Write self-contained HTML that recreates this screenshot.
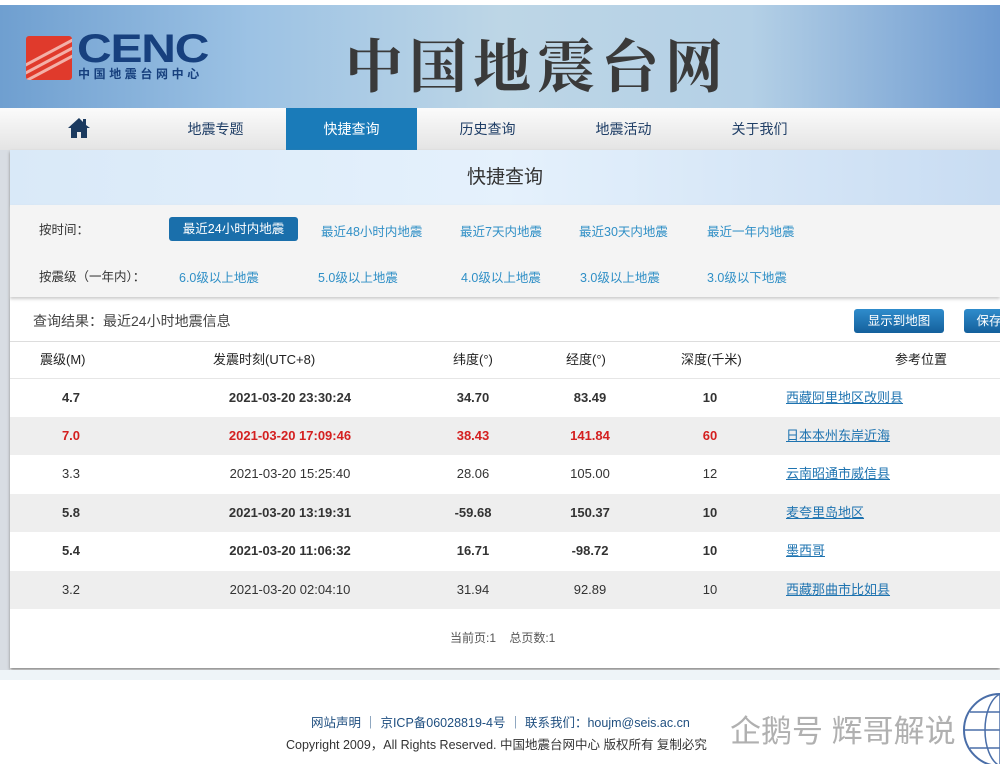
<!DOCTYPE html>
<html><head><meta charset="utf-8"><style>
*{margin:0;padding:0;box-sizing:border-box}
body{width:1000px;height:764px;overflow:hidden;background:#fff;font-family:"Liberation Sans","Noto Sans CJK SC",sans-serif;position:relative;color:#333}
.a{position:absolute;white-space:nowrap}
#hdr{left:0;top:5px;width:1000px;height:103px;background:linear-gradient(90deg,#6f9fd0 0%,#9cc2e4 25%,#bdd6e6 50%,#b4d0e6 75%,#6d9ad0 100%)}
#nav{left:0;top:108px;width:1000px;height:42px;background:linear-gradient(#fbfbfb,#e4e4e4)}
.nv{top:108px;height:42px;line-height:42px;font-size:14px;color:#1f3e66;text-align:center}
#panel{left:10px;top:150px;width:990px;height:518px;background:#fff;box-shadow:0 2px 3px #888}
.f{font-size:12.5px;color:#2f8fc6}
.th{top:342px;height:36px;line-height:36px;font-size:13px;color:#222}
.r{position:absolute;left:10px;width:990px;height:38.5px;font-size:13px;line-height:38px}
.r span{position:absolute;text-align:center}
.r .l{color:#1e73b0;text-decoration:underline;text-align:left;font-weight:normal}
.b{font-weight:bold}
.btn{top:309px;height:24px;line-height:24px;font-size:12.5px;color:#fff;background:linear-gradient(#2f8ccc,#14609c);border-radius:3px;text-align:center}
</style></head><body>
<div class="a" id="hdr"></div>
<div class="a" style="left:26px;top:36px;width:46px;height:44px;background:#e03a2c;border-radius:3px;overflow:hidden">
<div style="position:absolute;left:-10px;top:14px;width:70px;height:3px;background:#f3b0a8;transform:rotate(-28deg)"></div>
<div style="position:absolute;left:-10px;top:22px;width:70px;height:3px;background:#f3b0a8;transform:rotate(-28deg)"></div>
<div style="position:absolute;left:-10px;top:30px;width:70px;height:3px;background:#f3b0a8;transform:rotate(-28deg)"></div></div>
<div class="a" style="left:77px;top:27px;font-size:40px;font-weight:900;color:#17407e;letter-spacing:-1px;font-family:'Liberation Sans',sans-serif;transform:scaleX(1.2);transform-origin:0 0">CENC</div>
<div class="a" style="left:78px;top:65px;font-size:12px;color:#17407e;letter-spacing:3.6px;font-weight:bold">中国地震台网中心</div>
<div class="a" style="left:345px;top:20px;font-size:58px;font-weight:700;color:#3a3a3a;letter-spacing:6px;font-family:'Noto Serif CJK SC',serif">中国地震台网</div>
<div class="a" id="nav"></div>
<svg class="a" style="left:67px;top:116px" width="24" height="24" viewBox="0 0 24 24"><path d="M12 2L1 12h3v10h6v-6h4v6h6V12h3L19 9V3h-3v3z" fill="#1b3a5f"/></svg>
<div class="a nv" style="left:150px;width:131px">地震专题</div>
<div class="a nv" style="left:286px;width:131px;background:#1a7bb9;color:#fff">快捷查询</div>
<div class="a nv" style="left:422px;width:131px">历史查询</div>
<div class="a nv" style="left:558px;width:131px">地震活动</div>
<div class="a nv" style="left:694px;width:131px">关于我们</div>
<div class="a" style="left:0;top:150px;width:10px;height:520px;background:#d8dde3"></div>
<div class="a" id="panel"></div>
<div class="a" style="left:10px;top:150px;width:990px;height:55px;background:linear-gradient(90deg,#d9e9f8,#e5f1fc 50%,#c8dcf2);line-height:55px;text-align:center;font-size:19px;color:#333">快捷查询</div>
<div class="a" style="left:10px;top:205px;width:990px;height:92px;background:#f4f4f4;box-shadow:0 2px 3px #ccc"></div>
<div class="a" style="left:39px;top:219px;font-size:12.5px;color:#333">按时间：</div>
<div class="a" style="left:169px;top:217px;width:129px;height:24px;line-height:24px;text-align:center;font-size:12.5px;color:#fff;background:#1a6fab;border-radius:3px">最近24小时内地震</div>
<div class="a f" style="left:321px;top:221px">最近48小时内地震</div>
<div class="a f" style="left:460px;top:221px">最近7天内地震</div>
<div class="a f" style="left:579px;top:221px">最近30天内地震</div>
<div class="a f" style="left:707px;top:221px">最近一年内地震</div>
<div class="a" style="left:39px;top:266px;font-size:12.5px;color:#333">按震级（一年内）：</div>
<div class="a f" style="left:179px;top:267px">6.0级以上地震</div>
<div class="a f" style="left:318px;top:267px">5.0级以上地震</div>
<div class="a f" style="left:461px;top:267px">4.0级以上地震</div>
<div class="a f" style="left:580px;top:267px">3.0级以上地震</div>
<div class="a f" style="left:707px;top:267px">3.0级以下地震</div>
<div class="a" style="left:33px;top:311px;font-size:14px;color:#444">查询结果：最近24小时地震信息</div>
<div class="a btn" style="left:854px;width:90px">显示到地图</div>
<div class="a btn" style="left:964px;width:50px">保存</div>
<div class="a" style="left:10px;top:341px;width:990px;height:1px;background:#ddd"></div>
<div class="a th" style="left:40px">震级(M)</div>
<div class="a th" style="left:213px">发震时刻(UTC+8)</div>
<div class="a th" style="left:453px">纬度(°)</div>
<div class="a th" style="left:566px">经度(°)</div>
<div class="a th" style="left:681px">深度(千米)</div>
<div class="a th" style="left:895px">参考位置</div>
<div class="r b" style="top:378px;background:#fff;border-top:1px solid #e6e6e6"><span style="left:40px;width:42px">4.7</span><span style="left:180px;width:200px">2021-03-20 23:30:24</span><span style="left:433px;width:60px">34.70</span><span style="left:550px;width:60px">83.49</span><span style="left:670px;width:60px">10</span><span class="l" style="left:776px">西藏阿里地区改则县</span></div>
<div class="r b" style="top:416.5px;background:#eeeeee;color:#d42020"><span style="left:40px;width:42px">7.0</span><span style="left:180px;width:200px">2021-03-20 17:09:46</span><span style="left:433px;width:60px">38.43</span><span style="left:550px;width:60px">141.84</span><span style="left:670px;width:60px">60</span><span class="l" style="left:776px">日本本州东岸近海</span></div>
<div class="r" style="top:455px;background:#fff"><span style="left:40px;width:42px">3.3</span><span style="left:180px;width:200px">2021-03-20 15:25:40</span><span style="left:433px;width:60px">28.06</span><span style="left:550px;width:60px">105.00</span><span style="left:670px;width:60px">12</span><span class="l" style="left:776px">云南昭通市威信县</span></div>
<div class="r b" style="top:493.5px;background:#eeeeee"><span style="left:40px;width:42px">5.8</span><span style="left:180px;width:200px">2021-03-20 13:19:31</span><span style="left:433px;width:60px">-59.68</span><span style="left:550px;width:60px">150.37</span><span style="left:670px;width:60px">10</span><span class="l" style="left:776px">麦夸里岛地区</span></div>
<div class="r b" style="top:532px;background:#fff"><span style="left:40px;width:42px">5.4</span><span style="left:180px;width:200px">2021-03-20 11:06:32</span><span style="left:433px;width:60px">16.71</span><span style="left:550px;width:60px">-98.72</span><span style="left:670px;width:60px">10</span><span class="l" style="left:776px">墨西哥</span></div>
<div class="r" style="top:570.5px;background:#eeeeee"><span style="left:40px;width:42px">3.2</span><span style="left:180px;width:200px">2021-03-20 02:04:10</span><span style="left:433px;width:60px">31.94</span><span style="left:550px;width:60px">92.89</span><span style="left:670px;width:60px">10</span><span class="l" style="left:776px">西藏那曲市比如县</span></div>
<div class="a" style="left:450px;top:629px;font-size:12px;color:#555">当前页:1 &nbsp;&nbsp;&nbsp;总页数:1</div>
<div class="a" style="left:0;top:670px;width:1000px;height:10px;background:#eef4f8"></div>
<div class="a" style="left:311px;top:712px;font-size:12.5px;color:#1f4f80">网站声明 ｜ 京ICP备06028819-4号 ｜ 联系我们：houjm@seis.ac.cn</div>
<div class="a" style="left:286px;top:734px;font-size:12.5px;color:#333">Copyright 2009，All Rights Reserved. 中国地震台网中心 版权所有 复制必究</div>
<div class="a" style="left:730px;top:706px;font-size:31px;color:rgba(150,150,150,.75)">企鹅号 辉哥解说</div>
<svg class="a" style="left:960px;top:690px" width="60" height="74" viewBox="0 0 60 74"><circle cx="40" cy="40" r="36" fill="none" stroke="#4a6ea8" stroke-width="2"/><path d="M4 40h72M40 4v72M10 22h60M10 58h60M40 4c-20 10-20 62 0 72" fill="none" stroke="#4a6ea8" stroke-width="1.5"/></svg>
</body></html>
